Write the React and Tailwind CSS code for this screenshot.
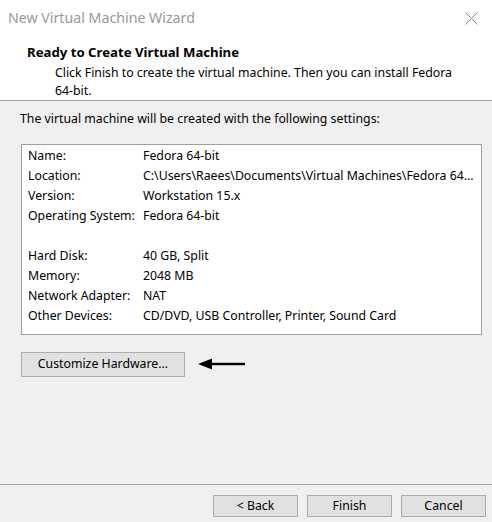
import React from 'react';

const rows = [
  ['Name:', 'Fedora 64-bit'],
  ['Location:', 'C:\\Users\\Raees\\Documents\\Virtual Machines\\Fedora 64...'],
  ['Version:', 'Workstation 15.x'],
  ['Operating System:', 'Fedora 64-bit'],
  ['', ''],
  ['Hard Disk:', '40 GB, Split'],
  ['Memory:', '2048 MB'],
  ['Network Adapter:', 'NAT'],
  ['Other Devices:', 'CD/DVD, USB Controller, Printer, Sound Card'],
];

const WinButton = ({ children, className = '' }) => (
  <button
    type="button"
    className={
      'h-[22px] w-[85px] border border-[#adadad] bg-[#e1e1e1] text-[12.3px] text-black leading-none ' +
      className
    }
  >
    {children}
  </button>
);

export default function App() {
  return (
    <div
      className="w-[492px] h-[522px] flex flex-col bg-[#f0f0f0] text-black overflow-hidden"
      style={{ fontFamily: '"Segoe UI", "Noto Sans", "Open Sans", sans-serif' }}
    >
      {/* title bar */}
      <div className="h-[36px] bg-white flex items-center justify-between pl-[8px] pr-[12px]">
        <span className="text-[14.2px] text-[#999999]">New Virtual Machine Wizard</span>
        <svg width="13" height="13" viewBox="0 0 13 13" className="mr-[2px]">
          <path d="M0.5 0.5 L12.5 12.5 M12.5 0.5 L0.5 12.5" stroke="#8a8a8a" strokeWidth="1" fill="none" />
        </svg>
      </div>

      {/* header */}
      <div className="h-[65px] bg-white border-b border-[#a0a0a0] pt-[7px]">
        <div className="pl-[27px] text-[13.2px] font-bold leading-[18px]">Ready to Create Virtual Machine</div>
        <div className="pl-[55px] pr-[40px] text-[12.3px] leading-[18px] mt-[3px]">
          Click Finish to create the virtual machine. Then you can install Fedora 64-bit.
        </div>
      </div>

      {/* body */}
      <div className="flex-1 flex flex-col px-[21px] pt-[10px]">
        <div className="text-[12.3px] leading-[16px] -ml-[1px]">
          The virtual machine will be created with the following settings:
        </div>

        <div className="mt-[17px] w-[461px] h-[191px] border border-[#a0a0a0] bg-white pt-[1px] pl-[6px]">
          {rows.map(([label, value], i) => (
            <div key={i} className="h-[20px] flex items-center text-[12.3px] whitespace-nowrap">
              <span className="w-[115px] shrink-0">{label}</span>
              <span>{value}</span>
            </div>
          ))}
        </div>

        <div className="mt-[17px] flex items-center">
          <button
            type="button"
            className="h-[25px] w-[164px] border border-[#adadad] bg-[#e1e1e1] text-[12.3px] leading-none"
          >
            Customize Hardware...
          </button>
          <svg width="47" height="12" viewBox="0 0 47 12" className="ml-[13px] mt-[-1px]">
            <polygon points="0,6 14,0.5 14,11.5" fill="#000" />
            <rect x="12" y="4.8" width="35" height="2.4" fill="#000" />
          </svg>
        </div>
      </div>

      {/* footer */}
      <div className="border-t border-[#a0a0a0] h-[38px] flex items-start justify-end gap-[9px] pt-[10px] pr-[6px]">
        <WinButton>&lt; Back</WinButton>
        <WinButton>Finish</WinButton>
        <WinButton>Cancel</WinButton>
      </div>
    </div>
  );
}
